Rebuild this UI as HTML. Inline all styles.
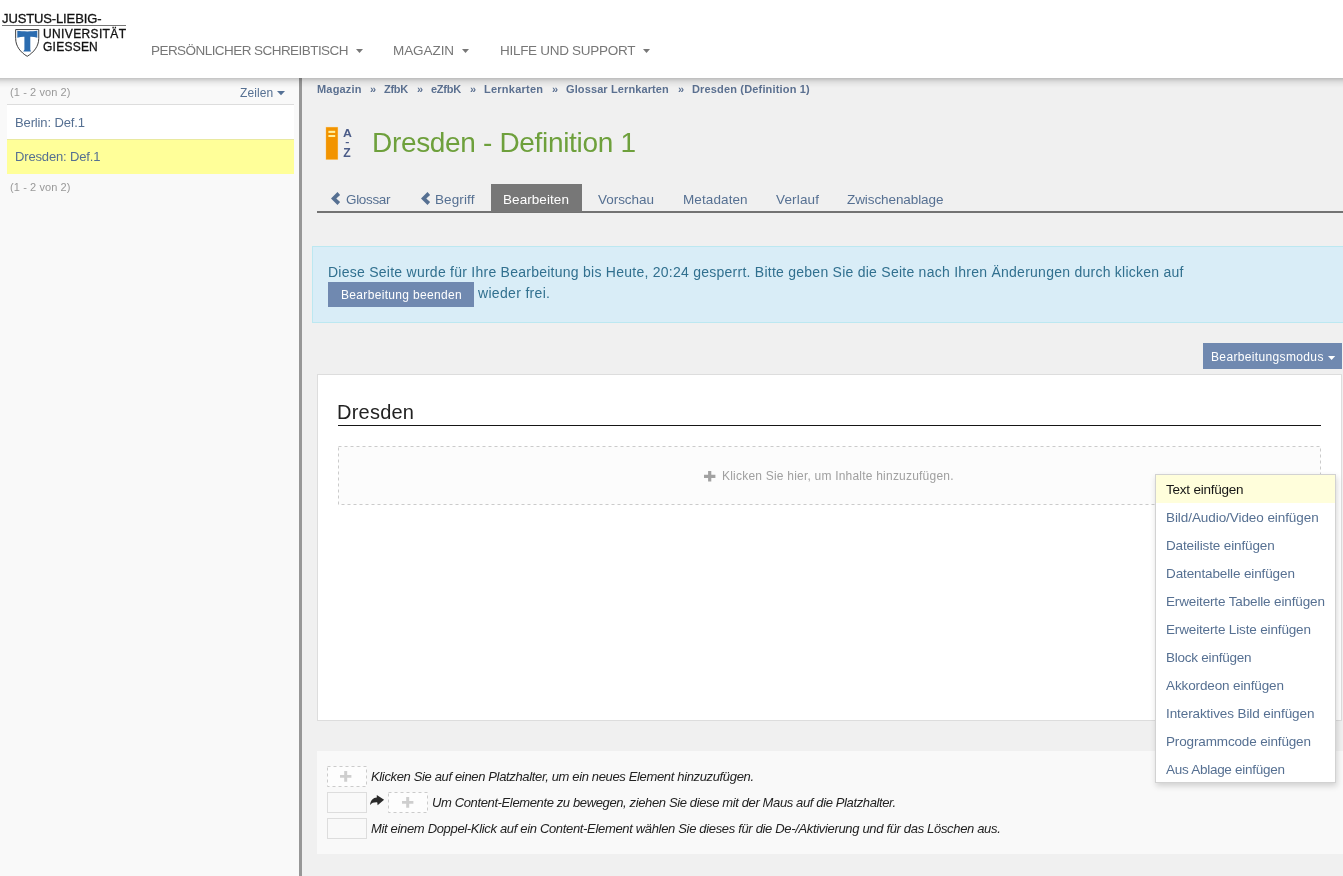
<!DOCTYPE html>
<html lang="de">
<head>
<meta charset="utf-8">
<title>Dresden - Definition 1</title>
<style>
html,body{margin:0;padding:0;}
body{width:1343px;height:876px;overflow:hidden;background:#f0f0f0;font-family:"Liberation Sans",sans-serif;position:relative;}
.t{will-change:transform;position:absolute;white-space:nowrap;line-height:1;margin:0;padding:0;font-weight:normal;text-decoration:none;display:block;}
.b{position:absolute;box-sizing:border-box;}
header,nav,aside,main,section,ul,li{margin:0;padding:0;list-style:none;}
svg{position:absolute;overflow:visible;will-change:transform;}
</style>
</head>
<body>

<aside>
<div class="b" style="left:0;top:78px;width:299px;height:798px;background:#f9f9f9;"></div>
<div class="b" style="left:299px;top:78px;width:3px;height:798px;background:#979797;"></div>
<div class="b" style="left:7px;top:104px;width:287px;height:1px;background:#ddd;"></div>
<div class="b" style="left:7px;top:105px;width:287px;height:34px;background:#fff;"></div>
<div class="b" style="left:7px;top:139px;width:287px;height:35px;background:#ffff99;border-top:1px solid #e9e9a0;"></div>
<svg style="left:277px;top:91px;" width="8" height="4.2" viewBox="0 0 8 4.2"><path d="M0 0h8L4 4.2z" fill="#557196"/></svg>
<span class="t" style="left:9.6px;top:86.8px;font-size:11px;letter-spacing:0.099px;color:#999">(1 - 2 von 2)</span>
<a class="t" style="left:240px;top:86.8px;font-size:12px;letter-spacing:0.103px;color:#567092">Zeilen</a>
<a class="t" style="left:15.3px;top:115.7px;font-size:13px;letter-spacing:-0.129px;color:#567092">Berlin: Def.1</a>
<a class="t" style="left:15.3px;top:150.3px;font-size:13px;letter-spacing:-0.149px;color:#567092">Dresden: Def.1</a>
<span class="t" style="left:9.6px;top:181.7px;font-size:11px;letter-spacing:0.099px;color:#999">(1 - 2 von 2)</span>
</aside>

<main>
<nav>
<a class="t" style="left:317px;top:84px;font-size:11px;letter-spacing:0.182px;font-weight:bold;color:#5b7090">Magazin</a>
<span class="t" style="left:369.9px;top:84px;font-size:11px;font-weight:bold;color:#5b7090">»</span>
<a class="t" style="left:384px;top:84px;font-size:11px;letter-spacing:-0.282px;font-weight:bold;color:#5b7090">ZfbK</a>
<span class="t" style="left:417.3px;top:84px;font-size:11px;font-weight:bold;color:#5b7090">»</span>
<a class="t" style="left:430.8px;top:84px;font-size:11px;letter-spacing:-0.268px;font-weight:bold;color:#5b7090">eZfbK</a>
<span class="t" style="left:470px;top:84px;font-size:11px;font-weight:bold;color:#5b7090">»</span>
<a class="t" style="left:484.1px;top:84px;font-size:11px;letter-spacing:0.238px;font-weight:bold;color:#5b7090">Lernkarten</a>
<span class="t" style="left:552px;top:84px;font-size:11px;font-weight:bold;color:#5b7090">»</span>
<a class="t" style="left:566.3px;top:84px;font-size:11px;letter-spacing:0.113px;font-weight:bold;color:#5b7090">Glossar Lernkarten</a>
<span class="t" style="left:677.8px;top:84px;font-size:11px;font-weight:bold;color:#5b7090">»</span>
<a class="t" style="left:691.8px;top:84px;font-size:11px;letter-spacing:0.162px;font-weight:bold;color:#5b7090">Dresden (Definition 1)</a>
</nav>

<svg style="left:325px;top:126px;" width="30" height="36" viewBox="0 0 30 36">
<rect x="0.7" y="0.9" width="12.4" height="32.9" fill="#fbd28a"/>
<rect x="1.1" y="1.3" width="11.6" height="32.1" fill="#f29400"/>
<rect x="3.4" y="4.8" width="6.8" height="2.1" fill="#fff0a0"/>
<rect x="3.4" y="9" width="6.8" height="2" fill="#fff0a0"/>
<text transform="translate(17.9 11.1) scale(1.1 1)" font-family="Liberation Sans, sans-serif" font-weight="bold" font-size="11.2" fill="#4b5c88">A</text>
<rect x="20.7" y="16" width="3.2" height="1.2" fill="#4b5c88"/>
<text x="18.3" y="30.9" font-family="Liberation Sans, sans-serif" font-weight="bold" font-size="12.2" fill="#4b5c88">Z</text>
</svg>
<h1 class="t" style="left:371.6px;top:129.1px;font-size:28px;letter-spacing:-0.324px;color:#6ea03c">Dresden - Definition 1</h1>

<div class="b" style="left:317px;top:211px;width:1026px;height:2px;background:#737373;"></div>
<div class="b" style="left:491px;top:184px;width:91px;height:28px;background:#777;"></div>
<svg style="left:330.7px;top:192px;" width="9.1" height="12.9" viewBox="0 0 9.1 12.9"><path d="M6.5 0 L9.1 2.9 L5.3 6.45 L9.1 10 L6.5 12.9 L0 6.45 Z" fill="#567092"/></svg>
<svg style="left:420.6px;top:192px;" width="9.1" height="12.9" viewBox="0 0 9.1 12.9"><path d="M6.5 0 L9.1 2.9 L5.3 6.45 L9.1 10 L6.5 12.9 L0 6.45 Z" fill="#567092"/></svg>
<a class="t" style="left:345.5px;top:192.8px;font-size:13.5px;letter-spacing:-0.336px;color:#567092">Glossar</a>
<a class="t" style="left:435.4px;top:192.8px;font-size:13.5px;letter-spacing:0.103px;color:#567092">Begriff</a>
<a class="t" style="left:503.2px;top:192.8px;font-size:13.5px;letter-spacing:0.065px;color:#fff">Bearbeiten</a>
<a class="t" style="left:597.8px;top:192.8px;font-size:13.5px;letter-spacing:-0.042px;color:#567092">Vorschau</a>
<a class="t" style="left:682.7px;top:192.8px;font-size:13.5px;letter-spacing:0.1px;color:#567092">Metadaten</a>
<a class="t" style="left:776px;top:192.8px;font-size:13.5px;letter-spacing:0.161px;color:#567092">Verlauf</a>
<a class="t" style="left:846.9px;top:192.8px;font-size:13.5px;letter-spacing:-0.089px;color:#567092">Zwischenablage</a>

<section>
<div class="b" style="left:312px;top:246px;width:1040px;height:77px;background:#d9edf7;border:1px solid #bce8f1;"></div>
<div class="b" style="left:328px;top:282px;width:146px;height:25px;background:#7089b0;"></div>
<span class="t" style="left:328.2px;top:265.3px;font-size:14px;letter-spacing:0.253px;color:#31708f">Diese Seite wurde für Ihre Bearbeitung bis Heute, 20:24 gesperrt. Bitte geben Sie die Seite nach Ihren Änderungen durch klicken auf</span>
<span class="t" style="left:477.7px;top:286.1px;font-size:14px;letter-spacing:0.321px;color:#31708f">wieder frei.</span>
<span class="t" style="left:340.7px;top:289px;font-size:12px;letter-spacing:0.329px;color:#fff">Bearbeitung beenden</span>
</section>

<div class="b" style="left:1203px;top:343px;width:139px;height:26px;background:#7089b0;"></div>
<svg style="left:1327.6px;top:355.8px;" width="7.2" height="4" viewBox="0 0 7.2 4"><path d="M0 0h7.2L3.6 4z" fill="#fff"/></svg>
<span class="t" style="left:1210.8px;top:351.1px;font-size:12px;letter-spacing:0.354px;color:#fff">Bearbeitungsmodus</span>

<section>
<div class="b" style="left:317px;top:374px;width:1025px;height:347px;background:#fff;border:1px solid #ddd;"></div>
<div class="b" style="left:338px;top:424.7px;width:983px;height:1.4px;background:#161616;"></div>
<svg style="left:338px;top:446px;" width="983" height="59" viewBox="0 0 983 59"><rect x="0.5" y="0.5" width="982" height="58" fill="#fcfcfc" stroke="#cbcbcb" stroke-width="1" stroke-dasharray="3 3"/></svg>
<svg style="left:703.6px;top:470.6px;" width="11.4" height="10.6" viewBox="0 0 11.4 10.6"><path d="M4.1 0h3.2v3.7h4.1v3.2H7.3v3.7H4.1V6.9H0V3.7h4.1z" fill="#a2a2a2"/></svg>
<h1 class="t" style="left:337.4px;top:401.6px;font-size:20px;letter-spacing:0.232px;color:#222">Dresden</h1>
<span class="t" style="left:722.3px;top:470px;font-size:12px;letter-spacing:0.212px;color:#a0a0a0">Klicken Sie hier, um Inhalte hinzuzufügen.</span>
</section>

<section>
<div class="b" style="left:317px;top:751px;width:1030px;height:103px;background:#f9f9f9;"></div>
<svg style="left:327px;top:766px;" width="40" height="21" viewBox="0 0 40 21"><rect x="0.5" y="0.5" width="39" height="20" fill="#fdfdfd" stroke="#cbcbcb" stroke-width="1" stroke-dasharray="3 3"/></svg>
<div class="b" style="left:327px;top:792px;width:40px;height:21px;background:#f9f9f9;border:1px solid #ddd;"></div>
<svg style="left:388px;top:792px;" width="40" height="21" viewBox="0 0 40 21"><rect x="0.5" y="0.5" width="39" height="20" fill="#fdfdfd" stroke="#cbcbcb" stroke-width="1" stroke-dasharray="3 3"/></svg>
<div class="b" style="left:327px;top:818px;width:40px;height:21px;background:#f9f9f9;border:1px solid #ddd;"></div>
<svg style="left:340.2px;top:771.2px;" width="11.4" height="10.7" viewBox="0 0 11.4 10.7"><path d="M4.2 0h3v3.9h4.2v2.9H7.2v3.9h-3V6.8H0V3.9h4.2z" fill="#cecece"/></svg>
<svg style="left:401.8px;top:797.3px;" width="11.4" height="10.7" viewBox="0 0 11.4 10.7"><path d="M4.2 0h3v3.9h4.2v2.9H7.2v3.9h-3V6.8H0V3.9h4.2z" fill="#cecece"/></svg>
<svg style="left:370px;top:795.4px;" width="14.2" height="10.3" viewBox="0 0 14.2 10.3"><path d="M6.8 0 L14.1 4.85 L7.6 10.2 L7.3 7.4 C4.2 7.2 1.8 8 0 9.9 C0.6 5.2 3.2 2.9 6.8 2.6 Z" fill="#2a2a2a"/></svg>
<span class="t" style="left:370.9px;top:770.3px;font-size:13px;letter-spacing:-0.351px;font-style:italic;color:#222">Klicken Sie auf einen Platzhalter, um ein neues Element hinzuzufügen.</span>
<span class="t" style="left:432.3px;top:796px;font-size:13px;letter-spacing:-0.374px;font-style:italic;color:#222">Um Content-Elemente zu bewegen, ziehen Sie diese mit der Maus auf die Platzhalter.</span>
<span class="t" style="left:370.9px;top:821.7px;font-size:13px;letter-spacing:-0.332px;font-style:italic;color:#222">Mit einem Doppel-Klick auf ein Content-Element wählen Sie dieses für die De-/Aktivierung und für das Löschen aus.</span>
</section>

<div class="b" style="left:1155px;top:474px;width:181px;height:309px;background:#fff;border:1px solid #d2d2d2;box-shadow:1px 3px 6px rgba(0,0,0,.16);"></div>
<div class="b" style="left:1156px;top:475px;width:179px;height:27.5px;background:#fffedb;"></div>
<a class="t" style="left:1165.5px;top:482.8px;font-size:13.5px;letter-spacing:-0.226px;color:#161616">Text einfügen</a>
<a class="t" style="left:1165.5px;top:510.8px;font-size:13.5px;letter-spacing:-0.07px;color:#567092">Bild/Audio/Video einfügen</a>
<a class="t" style="left:1165.5px;top:538.8px;font-size:13.5px;letter-spacing:-0.132px;color:#567092">Dateiliste einfügen</a>
<a class="t" style="left:1165.5px;top:566.8px;font-size:13.5px;letter-spacing:-0.123px;color:#567092">Datentabelle einfügen</a>
<a class="t" style="left:1165.5px;top:594.8px;font-size:13.5px;letter-spacing:-0.143px;color:#567092">Erweiterte Tabelle einfügen</a>
<a class="t" style="left:1165.5px;top:622.8px;font-size:13.5px;letter-spacing:-0.15px;color:#567092">Erweiterte Liste einfügen</a>
<a class="t" style="left:1165.5px;top:650.8px;font-size:13.5px;letter-spacing:-0.236px;color:#567092">Block einfügen</a>
<a class="t" style="left:1165.5px;top:678.8px;font-size:13.5px;letter-spacing:-0.123px;color:#567092">Akkordeon einfügen</a>
<a class="t" style="left:1165.5px;top:706.8px;font-size:13.5px;letter-spacing:-0.098px;color:#567092">Interaktives Bild einfügen</a>
<a class="t" style="left:1165.5px;top:734.8px;font-size:13.5px;letter-spacing:-0.142px;color:#567092">Programmcode einfügen</a>
<a class="t" style="left:1165.5px;top:762.8px;font-size:13.5px;letter-spacing:-0.27px;color:#567092">Aus Ablage einfügen</a>
</main>

<header>
<div class="b" style="left:0;top:0;width:1343px;height:78px;background:#fff;"></div>
<div class="b" style="left:0;top:78px;width:1343px;height:10px;background:linear-gradient(to bottom,rgba(0,0,0,.22) 0,rgba(0,0,0,.14) 2px,rgba(0,0,0,.075) 4px,rgba(0,0,0,.03) 6.5px,rgba(0,0,0,0) 10px);"></div>
<div class="b" style="left:2px;top:25px;width:124px;height:1px;background:#777;"></div>
<svg style="left:14px;top:28px;" width="27" height="30" viewBox="0 0 27 30">
<path d="M1.65 1.55 L24.75 1.55 L24.75 10.5 C24.75 18.3 19.8 24.4 13.2 28.3 C6.6 24.4 1.65 18.3 1.65 10.5 Z" fill="#fff" stroke="#2a2a2a" stroke-width="0.9"/>
<path d="M3.3 2.8 C8 3.6 18.8 3.6 23.3 2.8 L23.3 9.7 C21 8.9 18.5 8.6 16.3 8.7 L16.3 21.8 L17 23.4 L9.2 23.4 L10.4 21.8 L10.4 8.7 C8.3 8.6 5.8 8.9 3.3 9.7 Z" fill="#2b6cb0"/>
</svg>
<span class="t" style="left:2.2px;top:11.6px;font-size:13px;letter-spacing:-0.125px;color:#111;-webkit-text-stroke:0.3px #111">JUSTUS-LIEBIG-</span>
<span class="t" style="left:42.7px;top:27.7px;font-size:12px;letter-spacing:0.366px;color:#111;-webkit-text-stroke:0.3px #111">UNIVERSITÄT</span>
<span class="t" style="left:43.2px;top:41.4px;font-size:12px;letter-spacing:0.24px;color:#111;-webkit-text-stroke:0.3px #111">GIESSEN</span>
<svg style="left:355.8px;top:48.6px;" width="7" height="4" viewBox="0 0 7 4"><path d="M0 0h7L3.5 4z" fill="#777"/></svg>
<svg style="left:461.6px;top:48.6px;" width="7" height="4" viewBox="0 0 7 4"><path d="M0 0h7L3.5 4z" fill="#777"/></svg>
<svg style="left:643.1px;top:48.6px;" width="7" height="4" viewBox="0 0 7 4"><path d="M0 0h7L3.5 4z" fill="#777"/></svg>
<nav>
<a class="t" style="left:151.2px;top:43.8px;font-size:13.5px;letter-spacing:-0.554px;color:#777">PERSÖNLICHER SCHREIBTISCH</a>
<a class="t" style="left:393.4px;top:43.8px;font-size:13.5px;letter-spacing:-0.069px;color:#777">MAGAZIN</a>
<a class="t" style="left:499.8px;top:43.8px;font-size:13.5px;letter-spacing:-0.289px;color:#777">HILFE UND SUPPORT</a>
</nav>
</header>

</body>
</html>
